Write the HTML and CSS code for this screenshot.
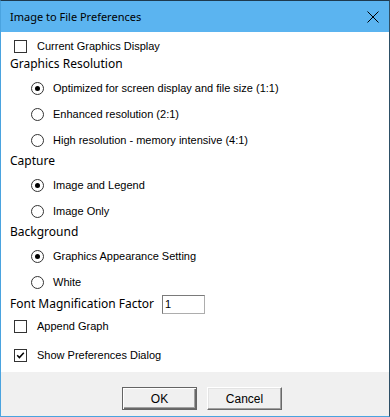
FILE: index.html
```html
<!DOCTYPE html>
<html lang="en">
  <head>
    <meta charset="utf-8">
    <title>Image to File Preferences</title>
    <link rel="stylesheet" href="styles.css">
  </head>
  <body>
    <div class="window">
      <div class="titlebar">
        <div class="title">Image to File Preferences</div>
        <svg class="close" width="12" height="12" viewBox="0 0 12 12">
          <path d="M0.5 0.5 L11.5 11.5 M11.5 0.5 L0.5 11.5" stroke="#000" stroke-width="1" fill="none"/>
        </svg>
      </div>

      <div class="content">
        <label class="check_row first_row">
          <span class="checkbox"></span>
          <span>Current Graphics Display</span>
        </label>

        <div class="group_title">Graphics Resolution</div>
        <div class="radio_group">
          <div class="radio_row"><span class="radio checked"></span><span>Optimized for screen display and file size (1:1)</span></div>
          <div class="radio_row"><span class="radio"></span><span>Enhanced resolution (2:1)</span></div>
          <div class="radio_row"><span class="radio"></span><span>High resolution - memory intensive (4:1)</span></div>
        </div>

        <div class="group_title">Capture</div>
        <div class="radio_group">
          <div class="radio_row"><span class="radio checked"></span><span>Image and Legend</span></div>
          <div class="radio_row"><span class="radio"></span><span>Image Only</span></div>
        </div>

        <div class="group_title">Background</div>
        <div class="radio_group">
          <div class="radio_row"><span class="radio checked"></span><span>Graphics Appearance Setting</span></div>
          <div class="radio_row"><span class="radio"></span><span>White</span></div>
        </div>

        <div class="field_row">
          <span class="group_title">Font Magnification Factor</span>
          <span class="text_input">1</span>
        </div>

        <label class="check_row append_row">
          <span class="checkbox"></span>
          <span>Append Graph</span>
        </label>

        <label class="check_row show_row">
          <span class="checkbox">
            <svg width="11" height="11" viewBox="0 0 11 11">
              <path d="M2.2 5.3 L4.4 7.6 L8.8 2.8" stroke="#000" stroke-width="1.5" fill="none"/>
            </svg>
          </span>
          <span>Show Preferences Dialog</span>
        </label>
      </div>

      <div class="footer">
        <div class="button default_button">OK</div>
        <div class="button">Cancel</div>
      </div>
    </div>
  </body>
</html>
```

FILE: styles.css
```css
html, body {
  margin:0;
  padding:0;
}
body {
  font-family: 'Liberation Sans', Arial, sans-serif;
  font-size:11px;
  color:#000;
  background:#fff;
}

.window {
  width:390px;
  height:417px;
  box-sizing:border-box;
  border-left:1px solid #4aa3df;
  border-bottom:1px solid #4aa3df;
  border-right:1px solid #2d4f66;
  border-top:1px solid #1e3a4f;
  display:flex;
  flex-direction:column;
  background:#fff;
}

.titlebar {
  height:31px;
  background-color:#5bb4f0;
  display:flex;
  align-items:center;
  justify-content:space-between;
  padding:0 9px 0 9px;
  flex-shrink:0;
}
.title {
  font-family: 'Noto Sans', 'Open Sans', sans-serif;
  font-size:11px;
  color:#000;
}
.close {
  margin-right:1px;
}

.content {
  height:340px;
  box-sizing:border-box;
  padding-top:6px;
  display:flex;
  flex-direction:column;
}

.check_row {
  height:16px;
  display:flex;
  align-items:center;
  padding-left:13px;
}
.checkbox {
  width:13px;
  height:13px;
  box-sizing:border-box;
  border:1px solid #333;
  background:#fff;
  margin-right:10px;
  display:flex;
  align-items:center;
  justify-content:center;
}
.first_row {
  margin-bottom:2px;
}
.append_row {
  margin-top:3px;
}
.show_row {
  margin-top:13px;
}

.group_title {
  height:16px;
  line-height:16px;
  padding-left:9px;
  font-family: 'Noto Sans', 'Open Sans', sans-serif;
  font-size:12px;
}

.radio_group {
  margin-top:3px;
  display:flex;
  flex-direction:column;
}
.radio_row {
  height:26px;
  display:flex;
  align-items:center;
  padding-left:30px;
}
.radio {
  width:13px;
  height:13px;
  box-sizing:border-box;
  border:1px solid #333;
  border-radius:50%;
  background:#fff;
  margin-right:9px;
  display:flex;
  align-items:center;
  justify-content:center;
}
.radio.checked::after {
  content:'';
  width:5px;
  height:5px;
  border-radius:50%;
  background:#000;
}

.field_row {
  height:22px;
  margin-top:-2px;
  display:flex;
  align-items:center;
}
.field_row .group_title {
  height:auto;
}
.text_input {
  margin-left:8px;
  width:43px;
  height:19px;
  box-sizing:border-box;
  border:1px solid #adadad;
  border-top-color:#7a7a7a;
  border-left-color:#7a7a7a;
  padding:2px 0 0 2px;
  line-height:13px;
  background:#fff;
}

.footer {
  flex-grow:1;
  background:#f0f0f0;
  display:flex;
  align-items:flex-start;
  padding:15px 0 0 121px;
  gap:10px;
}
.button {
  width:75px;
  height:23px;
  box-sizing:border-box;
  background:#f0f0f0;
  border:1px solid;
  border-color:#fff #696969 #696969 #fff;
  box-shadow:inset -1px -1px 0 #a0a0a0, inset 1px 1px 0 #e3e3e3;
  display:flex;
  align-items:center;
  justify-content:center;
  font-family: 'Liberation Sans', Arial, sans-serif;
  font-size:12px;
  user-select:none;
}
.default_button {
  border-color:#646464;
  box-shadow:inset 1px 1px 0 #fff, inset -1px -1px 0 #696969, inset -2px -2px 0 #a0a0a0;
}
```
